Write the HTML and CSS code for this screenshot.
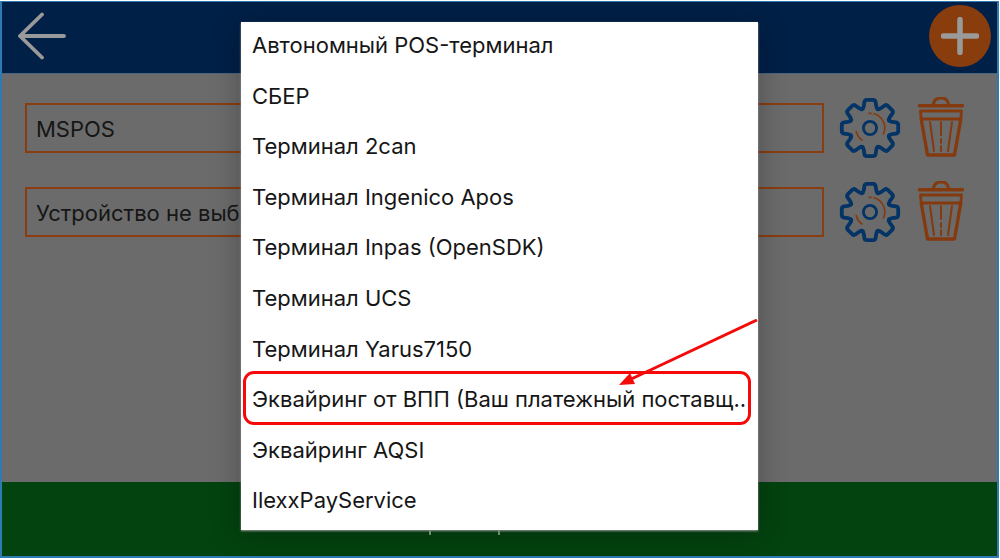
FILE: index.html
```html
<!DOCTYPE html>
<html lang="ru">
<head>
<meta charset="utf-8">
<title>Устройства</title>
<link rel="stylesheet" href="styles.css">
</head>
<body>
<svg class="defs" width="0" height="0" aria-hidden="true">
  <defs>
    <path id="tooth" d="M-8.2-18.7Q-6.6-19.6-6.2-22L-5.6-26Q-5.3-28.2-3-28.2H3Q5.3-28.2 5.6-26L6.2-22Q6.6-19.6 8.2-18.7"/>
    <symbol id="gear" viewBox="-31 -31 62 62">
      <g fill="none" stroke="#043466" stroke-width="3.8" stroke-linecap="round">
        <use href="#tooth"/>
        <use href="#tooth" transform="rotate(45)"/>
        <use href="#tooth" transform="rotate(90)"/>
        <use href="#tooth" transform="rotate(135)"/>
        <use href="#tooth" transform="rotate(180)"/>
        <use href="#tooth" transform="rotate(225)"/>
        <use href="#tooth" transform="rotate(270)"/>
        <use href="#tooth" transform="rotate(315)"/>
        <circle r="6.6" stroke-width="2.8"/>
      </g>
      <g fill="none" stroke="#843a0e" stroke-width="1.6" stroke-linecap="round">
        <path d="M4-14.2A14.8 14.8 0 0 1 13.5 6"/>
        <path d="M-1-14.6H1"/>
        <path d="M-13.8 3.5A14.5 14.5 0 0 0-8 12"/>
      </g>
    </symbol>
    <symbol id="trash" viewBox="0 0 46 60">
      <g fill="none" stroke="#843a0e" stroke-linecap="round" stroke-linejoin="round">
        <path d="M1.500 8.700H44.500" stroke-width="3.600"/>
        <path d="M15.500 8C15.500 -1.500 30.500 -1.500 30.500 8" stroke-width="3.200"/>
        <path d="M2.500 14H43.500L42.800 22H3.200Z" stroke-width="2.800"/>
        <path d="M3.200 22L9.500 58H36.500L42.800 22" stroke-width="3.400"/>
        <path d="M12 25L16 54" stroke-width="2"/>
        <path d="M34 25L30 54" stroke-width="2"/>
        <path d="M23 25V38M23 42V46M23 49V54" stroke-width="2"/>
      </g>
    </symbol>
  </defs>
</svg>

<main class="screen">
  <header class="topbar">
    <svg class="back" viewBox="0 0 48 48" aria-hidden="true">
      <path d="M24 2.500L2 24L24 45.500M2 24H46" fill="none" stroke="#9a9a9a" stroke-width="3.800" stroke-linecap="round" stroke-linejoin="round"/>
    </svg>
    <button class="add" type="button" aria-label="Добавить">
      <svg class="add-icon" viewBox="0 0 38 38" aria-hidden="true">
        <path d="M19 2.500V35.500M2.500 19H35.500" fill="none" stroke="#9a9a9a" stroke-width="5.500" stroke-linecap="round"/>
      </svg>
    </button>
  </header>

  <section class="devices">
    <div class="device">
      <div class="field">MSPOS</div>
      <svg class="gear"><use href="#gear"/></svg>
      <svg class="trash"><use href="#trash"/></svg>
    </div>
    <div class="device">
      <div class="field">Устройство не выбрано</div>
      <svg class="gear"><use href="#gear"/></svg>
      <svg class="trash"><use href="#trash"/></svg>
    </div>
  </section>

  <footer class="bottombar"></footer>
</main>

<ul class="menu">
  <li class="item">Автономный POS-терминал</li>
  <li class="item">СБЕР</li>
  <li class="item">Терминал 2can</li>
  <li class="item">Терминал Ingenico Apos</li>
  <li class="item">Терминал Inpas (OpenSDK)</li>
  <li class="item">Терминал UCS</li>
  <li class="item">Терминал Yarus7150</li>
  <li class="item">Эквайринг от ВПП (Ваш платежный поставщ..</li>
  <li class="item">Эквайринг AQSI</li>
  <li class="item">IlexxPayService</li>
</ul>

<span class="tick tick-a"></span>
<span class="tick tick-b"></span>

<div class="highlight"></div>
<svg class="pointer" viewBox="0 0 140 70" aria-hidden="true">
  <path d="M138 1L8 62" fill="none" stroke="#f50a0a" stroke-width="3"/>
  <path d="M0 66L11 54L16 65Z" fill="#f50a0a"/>
</svg>
</body>
</html>
```
FILE: styles.css
```css
* {
  box-sizing: border-box;
}

html,
body {
  margin: 0;
  height: 100%;
  background: #fff;
  overflow: hidden;
}

body {
  position: relative;
  font-family: Inter, "Noto Sans", sans-serif;
  color: #161616;
}

.defs {
  position: absolute;
}

.screen {
  display: flex;
  flex-direction: column;
  width: 999px;
  height: 557px;
  margin-top: 1px;
  border: 2px solid #2d7bb0;
  border-top-width: 1px;
}

.topbar {
  display: flex;
  align-items: flex-start;
  justify-content: space-between;
  flex: 0 0 72px;
  padding: 3px 6px 0 16px;
  background: #012047;
  border-bottom: 1px solid #4c6580;
}

.back {
  width: 48px;
  height: 48px;
  margin-top: 7px;
}

.add {
  display: flex;
  align-items: center;
  justify-content: center;
  width: 62px;
  height: 62px;
  padding: 0;
  border: 0;
  border-radius: 50%;
  background: #893c0c;
}

.add-icon {
  width: 38px;
  height: 38px;
}

.devices {
  display: flex;
  flex: 1;
  flex-direction: column;
  gap: 34px;
  padding: 29px 0 0 23px;
  background: #6b6b6b;
}

.device {
  display: flex;
  align-items: center;
  height: 50px;
}

.field {
  flex: 0 0 799px;
  height: 50px;
  padding: 1px 0 0 9px;
  border: 2px solid #8a3d10;
  font-size: 22px;
  line-height: 46px;
  white-space: nowrap;
  overflow: hidden;
}

.gear {
  flex: none;
  width: 62px;
  height: 62px;
  margin: -1px 0 0 15px;
}

.trash {
  flex: none;
  width: 46px;
  height: 60px;
  margin: -2px 0 0 17px;
}

.bottombar {
  flex: 0 0 74px;
  background: #03430f;
}

.menu {
  position: absolute;
  top: 22px;
  left: 241px;
  width: 517px;
  height: 508px;
  margin: 0;
  padding: 0;
  list-style: none;
  background: #fff;
  box-shadow: 0 1px 2px #9a9a9a, 0 4px 28px rgba(0, 0, 0, 0.28);
}

.item {
  height: 50.600px;
  padding-left: 11px;
  font-size: 22px;
  line-height: 47px;
  white-space: nowrap;
}

.tick {
  position: absolute;
  top: 530px;
  width: 2px;
  height: 5px;
  background: #6f8a74;
}

.tick-a {
  left: 429px;
}

.tick-b {
  left: 498px;
}

.highlight {
  position: absolute;
  top: 371px;
  left: 243px;
  width: 508px;
  height: 54px;
  border: 3px solid #f50a0a;
  border-radius: 11px;
}

.pointer {
  position: absolute;
  top: 319px;
  left: 619px;
  width: 140px;
  height: 70px;
}
```
